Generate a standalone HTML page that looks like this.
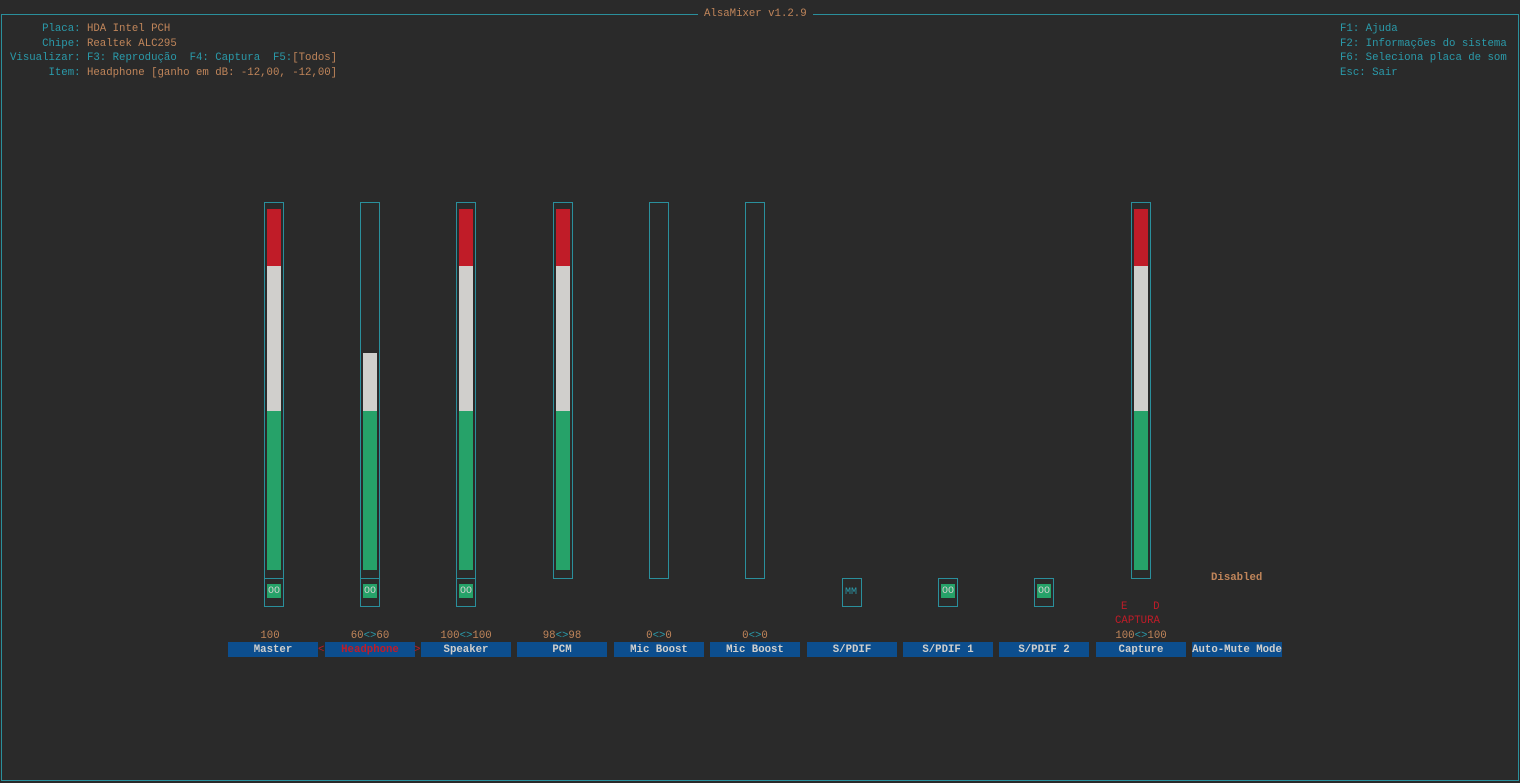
<!DOCTYPE html>
<html><head><meta charset="utf-8"><style>
body{margin:0;width:1520px;height:783px;background:#2a2a2a;overflow:hidden;position:relative;font-family:"Liberation Mono",monospace;font-size:10.7px;}
.a{position:absolute;white-space:pre;line-height:14.5px;}
.c{color:#2a9aaa}.o{color:#c0855a}.r{color:#c01c28}.w{color:#d0cfcc}
.frame{position:absolute;left:1px;top:14px;width:1516px;height:765px;border:1px solid #2a8f9c;}
.title{position:absolute;left:698px;top:7px;background:#2a2a2a;padding:0 6px;color:#c0855a;line-height:14.5px;}
.box{position:absolute;border:1px solid #2a8f9c;box-sizing:border-box;width:20px;}
.f{position:absolute;width:14px;}
.lbl{position:absolute;top:642px;width:90px;height:15px;background:#0c4e8e;color:#d0cfcc;text-align:center;line-height:16px;font-weight:bold;}
.sw{position:absolute;width:14px;height:14px;top:584px;background:#26a269;color:#d0cfcc;font-size:10px;line-height:15px;text-align:center;}
.v{position:absolute;top:629px;width:90px;text-align:center;color:#c0855a;line-height:14.5px;}
</style></head><body>
<div class="frame"></div>
<div class="title">AlsaMixer v1.2.9</div>
<div class="a" style="left:10px;top:22px"><span class="c">     Placa: </span><span class="o">HDA Intel PCH</span>
<span class="c">     Chipe: </span><span class="o">Realtek ALC295</span>
<span class="c">Visualizar: F3: Reprodução  F4: Captura  F5:</span><span class="o">[Todos]</span>
<span class="c">      Item: </span><span class="o">Headphone [ganho em dB: -12,00, -12,00]</span></div>
<div class="a c" style="left:1340px;top:22px">F1: Ajuda
F2: Informações do sistema
F6: Seleciona placa de som
Esc: Sair</div>

<!-- Master -->
<div class="box" style="left:264px;top:202px;height:377px"></div>
<div class="f" style="left:267px;top:209px;height:57px;background:#c01c28"></div>
<div class="f" style="left:267px;top:266px;height:145px;background:#d0cfcc"></div>
<div class="f" style="left:267px;top:411px;height:159px;background:#26a269"></div>
<div class="box" style="left:264px;top:578px;height:29px"></div>
<div class="sw" style="left:267px">OO</div>
<!-- Headphone -->
<div class="box" style="left:360px;top:202px;height:377px"></div>
<div class="f" style="left:363px;top:353px;height:58px;background:#d0cfcc"></div>
<div class="f" style="left:363px;top:411px;height:159px;background:#26a269"></div>
<div class="box" style="left:360px;top:578px;height:29px"></div>
<div class="sw" style="left:363px">OO</div>
<!-- Speaker -->
<div class="box" style="left:456px;top:202px;height:377px"></div>
<div class="f" style="left:459px;top:209px;height:57px;background:#c01c28"></div>
<div class="f" style="left:459px;top:266px;height:145px;background:#d0cfcc"></div>
<div class="f" style="left:459px;top:411px;height:159px;background:#26a269"></div>
<div class="box" style="left:456px;top:578px;height:29px"></div>
<div class="sw" style="left:459px">OO</div>
<!-- PCM -->
<div class="box" style="left:553px;top:202px;height:377px"></div>
<div class="f" style="left:556px;top:209px;height:57px;background:#c01c28"></div>
<div class="f" style="left:556px;top:266px;height:145px;background:#d0cfcc"></div>
<div class="f" style="left:556px;top:411px;height:159px;background:#26a269"></div>
<!-- Mic boosts -->
<div class="box" style="left:649px;top:202px;height:377px"></div>
<div class="box" style="left:745px;top:202px;height:377px"></div>
<!-- SPDIF -->
<div class="box" style="left:842px;top:578px;height:29px"></div>
<div class="a c" style="left:845px;top:586px;font-size:10px">MM</div>
<div class="box" style="left:938px;top:578px;height:29px"></div>
<div class="sw" style="left:941px">OO</div>
<div class="box" style="left:1034px;top:578px;height:29px"></div>
<div class="sw" style="left:1037px">OO</div>
<!-- Capture -->
<div class="box" style="left:1131px;top:202px;height:377px"></div>
<div class="f" style="left:1134px;top:209px;height:57px;background:#c01c28"></div>
<div class="f" style="left:1134px;top:266px;height:145px;background:#d0cfcc"></div>
<div class="f" style="left:1134px;top:411px;height:159px;background:#26a269"></div>
<div class="a o" style="left:1211px;top:571px;font-weight:bold">Disabled</div>
<div class="a r" style="left:1121px;top:600px">E    D</div>
<div class="a r" style="left:1115px;top:614px">CAPTURA</div>

<div class="v" style="left:225px">100</div>
<div class="v" style="left:325px">60<span class="c">&lt;&gt;</span>60</div>
<div class="v" style="left:421px">100<span class="c">&lt;&gt;</span>100</div>
<div class="v" style="left:517px">98<span class="c">&lt;&gt;</span>98</div>
<div class="v" style="left:614px">0<span class="c">&lt;&gt;</span>0</div>
<div class="v" style="left:710px">0<span class="c">&lt;&gt;</span>0</div>
<div class="v" style="left:1096px">100<span class="c">&lt;&gt;</span>100</div>

<div class="lbl" style="left:228px">Master</div>
<div class="a r" style="left:318px;top:643px">&lt;</div>
<div class="lbl" style="left:325px;color:#c01c28">Headphone</div>
<div class="a r" style="left:414px;top:643px">&gt;</div>
<div class="lbl" style="left:421px">Speaker</div>
<div class="lbl" style="left:517px">PCM</div>
<div class="lbl" style="left:614px">Mic Boost</div>
<div class="lbl" style="left:710px">Mic Boost</div>
<div class="lbl" style="left:807px">S/PDIF</div>
<div class="lbl" style="left:903px">S/PDIF 1</div>
<div class="lbl" style="left:999px">S/PDIF 2</div>
<div class="lbl" style="left:1096px">Capture</div>
<div class="lbl" style="left:1192px">Auto-Mute Mode</div>
</body></html>
